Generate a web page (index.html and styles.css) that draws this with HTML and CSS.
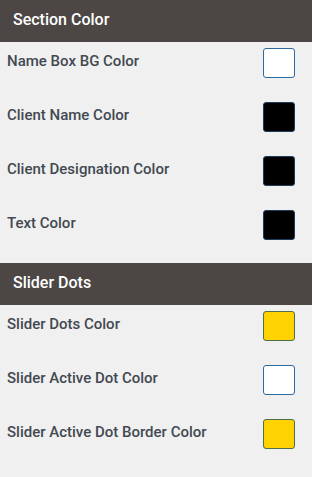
FILE: index.html
```html
<!DOCTYPE html>
<html lang="en">
  <head>
    <meta charset="UTF-8" />
    <link rel="stylesheet" href="styles.css">
  </head>
  <body>
    <div class="section">
      <h2 class="section-title">Section Color</h2>
      <div class="rows">
        <div class="row">
          <span class="label">Name Box BG Color</span>
          <span class="swatch swatch-white"></span>
        </div>
        <div class="row">
          <span class="label">Client Name Color</span>
          <span class="swatch swatch-black"></span>
        </div>
        <div class="row">
          <span class="label">Client Designation Color</span>
          <span class="swatch swatch-black"></span>
        </div>
        <div class="row">
          <span class="label">Text Color</span>
          <span class="swatch swatch-black"></span>
        </div>
      </div>
    </div>
    <div class="section">
      <h2 class="section-title">Slider Dots</h2>
      <div class="rows">
        <div class="row">
          <span class="label">Slider Dots Color</span>
          <span class="swatch swatch-yellow"></span>
        </div>
        <div class="row">
          <span class="label">Slider Active Dot Color</span>
          <span class="swatch swatch-white"></span>
        </div>
        <div class="row">
          <span class="label">Slider Active Dot Border Color</span>
          <span class="swatch swatch-yellow"></span>
        </div>
      </div>
    </div>
  </body>
</html>
```

FILE: styles.css
```css
body {
  margin: 0;
  background: #f0f0f1;
  font-family: Roboto, "Liberation Sans", sans-serif;
  color: #434950;
}

.section-title {
  margin: 0;
  height: 42px;
  padding: 0 13px 3px;
  box-sizing: border-box;
  display: flex;
  align-items: center;
  background: #4c4745;
  color: #fff;
  font-size: 16px;
  font-weight: 500;
}

.rows {
  display: flex;
  flex-direction: column;
  gap: 24px;
  padding: 6px 17px 23px 7px;
}

.row {
  display: flex;
  align-items: center;
  justify-content: space-between;
  height: 30px;
}

.label {
  font-size: 15px;
  font-weight: 500;
  margin-bottom: 4px;
}

.swatch {
  box-sizing: border-box;
  width: 32px;
  height: 30px;
  border-radius: 3px;
  border: 1px solid #2c6aa0;
}

.swatch-white {
  background: #fff;
}

.swatch-black {
  background: #000;
  border-color: #1d3c5c;
}

.swatch-yellow {
  background: #ffd200;
  border-color: #4f6f4a;
}
```
